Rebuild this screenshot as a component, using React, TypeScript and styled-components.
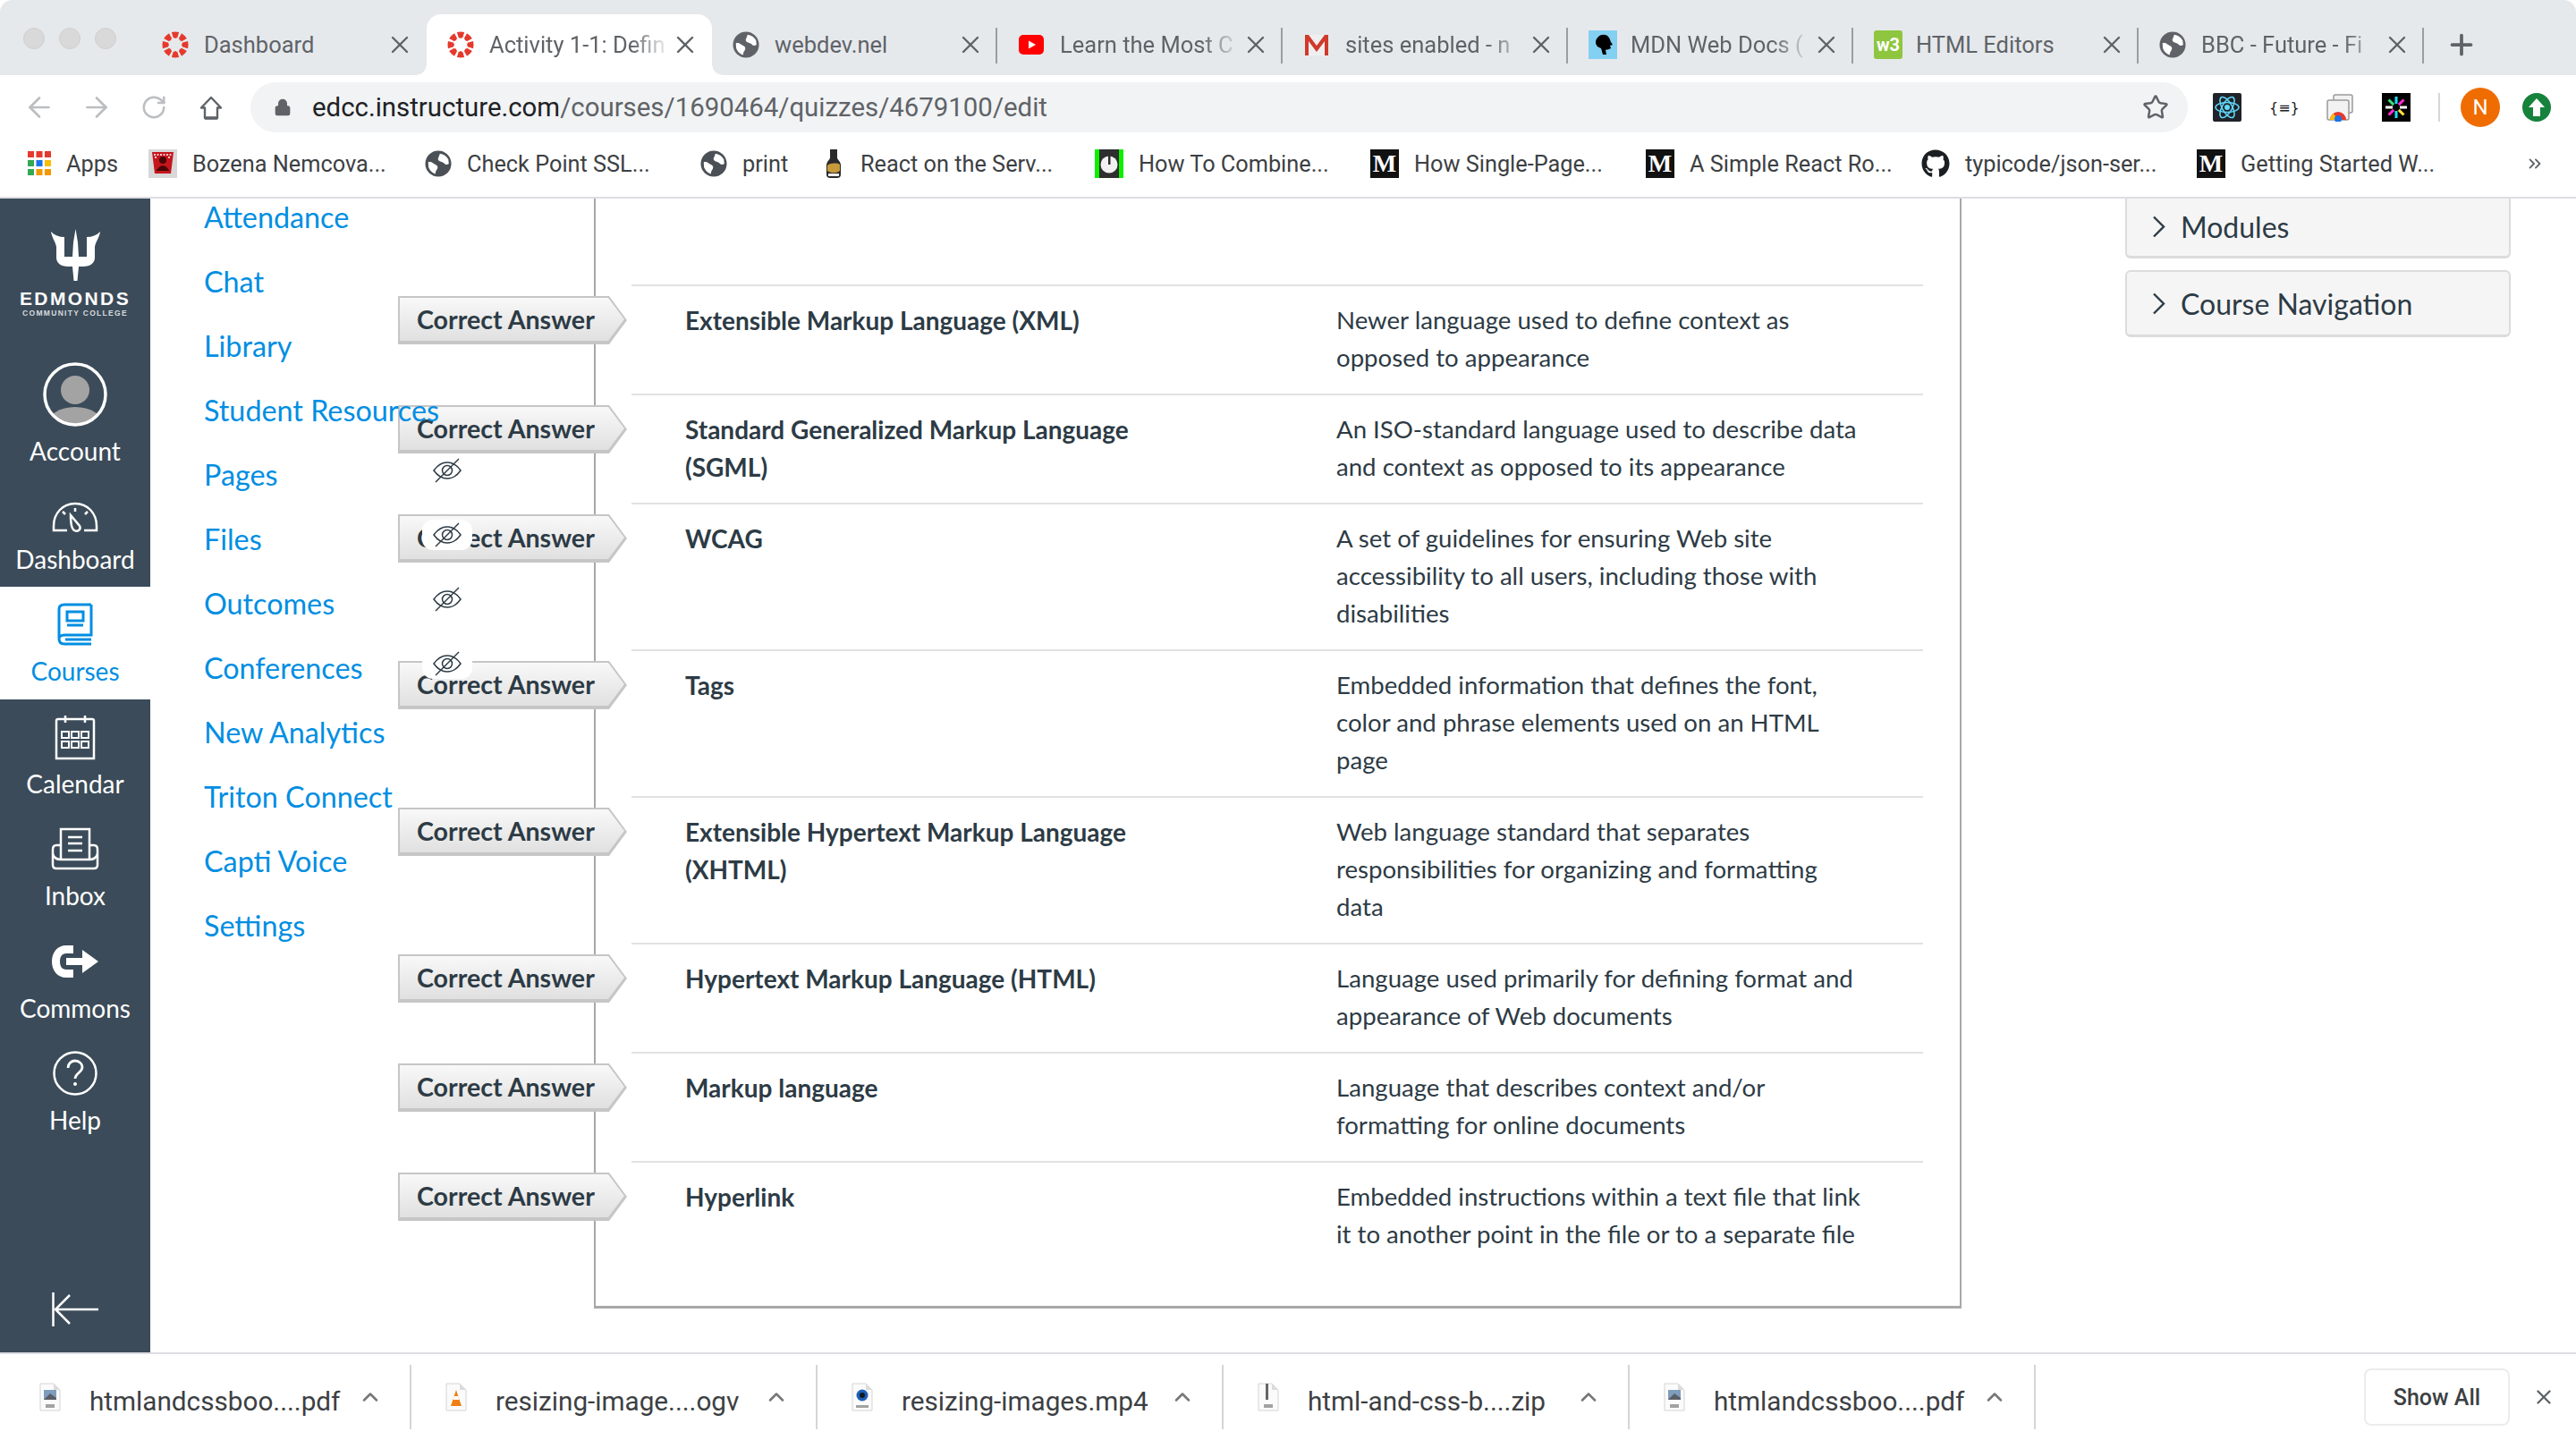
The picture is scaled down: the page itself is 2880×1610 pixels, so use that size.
import React from "react";
import styled, { createGlobalStyle, css } from "styled-components";
import {
  ArrowLeft,
  ArrowRight,
  ChevronUp,
  ChevronsRight,
  Lock,
  Plus,
  RotateCw,
  Star,
  X,
} from "lucide-react";
import { FaGithub } from "react-icons/fa";

const BLUE = "#008ee2";
const INK = "#2d3b45";

const tabs = [
  { title: "Dashboard", icon: "canvas" },
  { title: "Activity 1-1: Defin", icon: "canvas", active: true, fade: true },
  { title: "webdev.nel", icon: "globe" },
  { title: "Learn the Most C", icon: "youtube", fade: true },
  { title: "sites enabled - n", icon: "gmail", fade: true },
  { title: "MDN Web Docs (", icon: "mdn", fade: true },
  { title: "HTML Editors", icon: "w3" },
  { title: "BBC - Future - Fi", icon: "globe", fade: true },
];

const bookmarks = [
  { title: "Apps", icon: "apps", width: 135 },
  { title: "Bozena Nemcova...", icon: "film", width: 309 },
  { title: "Check Point SSL...", icon: "globe", width: 308 },
  { title: "print", icon: "globe", width: 136 },
  { title: "React on the Serv...", icon: "bottle", width: 305 },
  { title: "How To Combine...", icon: "clock", width: 308 },
  { title: "How Single-Page...", icon: "medium", width: 308 },
  { title: "A Simple React Ro...", icon: "medium", width: 308 },
  { title: "typicode/json-ser...", icon: "github", width: 308 },
  { title: "Getting Started W...", icon: "medium", width: 308 },
];

const courseLinks = [
  { label: "Attendance" },
  { label: "Chat" },
  { label: "Library" },
  { label: "Student Resources" },
  { label: "Pages", hidden: true },
  { label: "Files", hidden: true },
  { label: "Outcomes", hidden: true },
  { label: "Conferences", hidden: true },
  { label: "New Analytics" },
  { label: "Triton Connect" },
  { label: "Capti Voice" },
  { label: "Settings" },
];

const answers = [
  {
    term: "Extensible Markup Language (XML)",
    text: "Newer language used to define context as opposed to appearance",
  },
  {
    term: "Standard Generalized Markup Language (SGML)",
    text: "An ISO-standard language used to describe data and context as opposed to its appearance",
  },
  {
    term: "WCAG",
    text: "A set of guidelines for ensuring Web site accessibility to all users, including those with disabilities",
  },
  {
    term: "Tags",
    text: "Embedded information that defines the font, color and phrase elements used on an HTML page",
  },
  {
    term: "Extensible Hypertext Markup Language (XHTML)",
    text: "Web language standard that separates responsibilities for organizing and formatting data",
  },
  {
    term: "Hypertext Markup Language (HTML)",
    text: "Language used primarily for defining format and appearance of Web documents",
  },
  {
    term: "Markup language",
    text: "Language that describes context and/or formatting for online documents",
  },
  {
    term: "Hyperlink",
    text: "Embedded instructions within a text file that link it to another point in the file or to a separate file",
  },
];

const downloads = [
  { name: "htmlandcssboo....pdf", kind: "pdf" },
  { name: "resizing-image....ogv", kind: "vlc" },
  { name: "resizing-images.mp4", kind: "mov" },
  { name: "html-and-css-b....zip", kind: "zip" },
  { name: "htmlandcssboo....pdf", kind: "pdf" },
];

function CanvasLogo() {
  const spokes = [0, 45, 90, 135, 180, 225, 270, 315];
  return (
    <svg width="30" height="32" viewBox="0 0 32 32">
      {spokes.map((a) => (
        <g key={a} transform={`rotate(${a} 16 16)`}>
          <path d="M11.600 1 Q16 0 20.400 1 L18.400 7.800 Q16 7.200 13.600 7.800Z" fill="#e5392d" />
          <circle cx="22.400" cy="9.600" r="1.500" fill="#e5392d" />
        </g>
      ))}
    </svg>
  );
}

function Globe({ size = 30, color = "#5f6368" }: { size?: number; color?: string }) {
  return (
    <svg width={size} height={size} viewBox="0 0 32 32">
      <circle cx="16" cy="16" r="15.500" fill={color} />
      <path
        d="M18 4c4 .5 8 3 10 7l.6 5c-2 1.600-4 1.400-5.500-.3-1.500-1.600-3.500-1.700-5.300-2.600-2-1-2.800-3-1.400-4.800z"
        fill="#fff"
      />
      <path
        d="M4 14c2-.6 4 0 5.500 1.200 2 1.600 4.500 1.800 5.500 4 .8 2-.5 3.500-1.500 5-.8 1.200-.7 2.800-1 4-4-1.300-7-4.200-8.200-8.200z"
        fill="#fff"
      />
    </svg>
  );
}

function HomeIcon() {
  return (
    <svg width="26" height="27" viewBox="0 0 26 27">
      <path d="M13 2 L24 13.500 H20 V25 H6 V13.500 H2Z" fill="none" stroke="#5f6368" strokeWidth="2.400" strokeLinejoin="round" />
      <path d="M6 25 H20" stroke="#5f6368" strokeWidth="3.500" />
    </svg>
  );
}

function ChevronGlyph() {
  return (
    <svg width="15" height="25" viewBox="0 0 15 25">
      <path d="M2 1.500 L13 12.500 L2 23.500" fill="none" stroke={INK} strokeWidth="2.400" />
    </svg>
  );
}

function TabIcon({ kind }: { kind: string }) {
  switch (kind) {
    case "canvas":
      return <CanvasLogo />;
    case "globe":
      return <Globe />;
    case "youtube":
      return (
        <svg width="30" height="32" viewBox="0 0 30 32">
          <rect x="1" y="5" width="28" height="22" rx="5" fill="#f00" />
          <path d="M12 11.500 L20 16 L12 20.500Z" fill="#fff" />
        </svg>
      );
    case "gmail":
      return (
        <svg width="30" height="32" viewBox="0 0 30 32">
          <path d="M2 5 H28 V28 H2Z" fill="#f0efef" />
          <path d="M2 28 V5 H6 L15 17 L24 5 H28 V28 H24 V12 L15 24 L6 12 V28Z" fill="#d0392b" />
        </svg>
      );
    case "mdn":
      return (
        <svg width="32" height="32" viewBox="0 0 32 32">
          <rect width="32" height="32" fill="#83d0f2" />
          <path
            d="M11 7c3-3 9-3 11 0 2 2 2 4 3 6l2 3-3 1 1 3c-3 2-5 1-6 2l1 5-4 0-2-7c-3-1-6-3-6-7 0-2 1-4 3-6z"
            fill="#000"
          />
        </svg>
      );
    case "w3":
      return <W3Icon>w3</W3Icon>;
    default:
      return null;
  }
}

function BookmarkIcon({ kind }: { kind: string }) {
  switch (kind) {
    case "apps": {
      const colors = ["#e5392d", "#e5392d", "#e5392d", "#34a853", "#1a73e8", "#fbbc04", "#34a853", "#f29900", "#f29900"];
      return (
        <svg width="26" height="28" viewBox="0 0 26 28">
          {colors.map((c, i) => (
            <rect key={i} x={(i % 3) * 9.5} y={Math.floor(i / 3) * 10} width="7" height="7" fill={c} />
          ))}
        </svg>
      );
    }
    case "film":
      return (
        <svg width="32" height="32" viewBox="0 0 32 32">
          <rect width="32" height="32" fill="#d8d8d8" />
          <path d="M4 3 H28 L25 27 H7Z" fill="#c4161c" />
          <circle cx="16" cy="12" r="4" fill="#4a0507" />
          <path d="M8.500 24 Q16 12 23.500 24Z" fill="#4a0507" />
          <path d="M6 6 H26 M7 9 H10 M22 9 H25" stroke="#fff" strokeWidth="1.500" strokeDasharray="2 1.500" />
        </svg>
      );
    case "globe":
      return <Globe color="#4b5057" />;
    case "bottle":
      return (
        <svg width="26" height="32" viewBox="-3 0 26 32">
          <path d="M6 0 H14 V9 C14 12 18 13 18 18 V28 C18 31 16 32 14 32 H6 C4 32 2 31 2 28 V18 C2 13 6 12 6 9Z" fill="#2a2a2a" />
          <path d="M3 18 C6 15 14 15 17 17 V24 C13 27 7 27 3 24Z" fill="#c79a3b" />
          <path d="M4 27 H16 V30 H4Z" fill="#eee" />
        </svg>
      );
    case "clock":
      return (
        <svg width="32" height="32" viewBox="0 0 32 32">
          <rect width="32" height="32" fill="#0cf000" />
          <rect x="5" width="22" height="32" fill="#2e2e2e" />
          <circle cx="16" cy="17" r="9.500" fill="#f1f1f1" />
          <rect x="15" y="7" width="2.500" height="10" fill="#2e2e2e" />
        </svg>
      );
    case "medium":
      return <MediumIcon>M</MediumIcon>;
    case "github":
      return <FaGithub size={32} color="#1b1f23" />;
    default:
      return null;
  }
}

function FileIcon({ kind }: { kind: string }) {
  return (
    <svg width="24" height="32" viewBox="0 0 24 32">
      <path d="M1 1 H16 L23 8 V31 H1Z" fill="#fbfbfb" stroke="#d4d4d4" />
      <path d="M16 1 V8 H23Z" fill="#dcdcdc" />
      {kind === "pdf" && (
        <>
          <rect x="5" y="8" width="14" height="11" fill="#7f9dbd" />
          <path d="M5 19 L12 12 L19 17 V19Z" fill="#5b5f65" />
          <rect x="7" y="24" width="10" height="4" fill="#a2a2a2" />
        </>
      )}
      {kind === "vlc" && (
        <>
          <path d="M12 8 L18 26 H6Z" fill="#f07f13" />
          <path d="M9.500 15 H14.500 L15.500 19 H8.500Z" fill="#fff" />
        </>
      )}
      {kind === "mov" && (
        <>
          <circle cx="12" cy="14" r="6.500" fill="#1d5fb8" />
          <circle cx="12" cy="14" r="3" fill="#101820" />
          <rect x="5" y="25" width="14" height="3" fill="#a2a2a2" />
        </>
      )}
      {kind === "zip" && (
        <>
          <rect x="9" y="1" width="3" height="18" fill="#666" />
          <rect x="7" y="24" width="10" height="4" fill="#a2a2a2" />
        </>
      )}
    </svg>
  );
}

function Trident() {
  return (
    <svg width="55" height="58" viewBox="0 0 55 58">
      <path
        d="M0 3 C4 7 9 9 15 9 L15 31 L24 31 L25 15 L27.500 0 L30 15 L31 31 L40 31 L40 9 C46 9 51 7 55 3 C54 10 50 14 49 20 L49 32 C49 38 44 42 36 42 L31 42 L29.500 58 L25.500 58 L24 42 L19 42 C11 42 6 38 6 32 L6 20 C5 14 1 10 0 3Z"
        fill="#fff"
      />
    </svg>
  );
}

function Avatar() {
  return (
    <svg width="72" height="72" viewBox="0 0 72 72">
      <defs>
        <clipPath id="avatarClip">
          <circle cx="36" cy="36" r="33" />
        </clipPath>
      </defs>
      <g clipPath="url(#avatarClip)">
        <circle cx="36" cy="31" r="16" fill="#a3a3a3" />
        <ellipse cx="36" cy="70" rx="31" ry="20" fill="#a3a3a3" />
      </g>
      <circle cx="36" cy="36" r="34" fill="none" stroke="#fff" strokeWidth="3.500" />
    </svg>
  );
}

function NavIcon({ name }: { name: string }) {
  const stroke = { fill: "none", stroke: "currentColor", strokeWidth: 2.5 };
  switch (name) {
    case "Dashboard":
      return (
        <svg width="52" height="34" viewBox="0 0 52 34">
          <path d="M17 32 H2 V27 C2 13 12 2 26 2 C40 2 50 13 50 27 V32 H36" {...stroke} />
          <path d="M21 15 L31 27 C33 31 29 34 25 32 C21 30 21 20 21 15Z" {...stroke} />
          <path d="M26 7 V11 M12 11 L15 14 M40 11 L37 14" {...stroke} />
        </svg>
      );
    case "Courses":
      return (
        <svg width="40" height="48" viewBox="0 0 40 48">
          <path d="M38 2 H8 C4 2 2 4 2 7 V40 C2 44 4 46 8 46 H38 M38 2 V36 H8 C4 36 2 38 2 40" {...stroke} strokeWidth={3} />
          <path d="M38 41 H9" {...stroke} strokeWidth={3} />
          <rect x="11" y="10" width="18" height="10" {...stroke} strokeWidth={3} />
          <path d="M11 25 H29" {...stroke} strokeWidth={3} />
        </svg>
      );
    case "Calendar":
      return (
        <svg width="46" height="52" viewBox="0 0 46 52">
          <path d="M2 8 Q2 6 4 6 H42 Q44 6 44 8 V50 H2Z" {...stroke} />
          <path d="M12 2 V10 M34 2 V10" {...stroke} />
          {[0, 1, 2].map((c) =>
            [0, 1].map((r) => (
              <rect key={`${c}${r}`} x={8 + c * 11} y={20 + r * 11} width="8" height="7" {...stroke} strokeWidth={2} />
            )),
          )}
        </svg>
      );
    case "Inbox":
      return (
        <svg width="54" height="48" viewBox="0 0 54 48">
          <path d="M11 36 V2 H43 V36" {...stroke} />
          <path d="M11 20 H6 Q2 20 2 25 V42 Q2 46 6 46 H48 Q52 46 52 42 V25 Q52 20 48 20 H43" {...stroke} />
          <path d="M2 30 Q4 36 11 36 H43 Q50 36 52 30" {...stroke} />
          <path d="M19 11 H35 M19 18 H35 M19 26 H35" {...stroke} />
        </svg>
      );
    case "Commons":
      return (
        <svg width="52" height="36" viewBox="0 0 52 36">
          <path d="M24 0 H16 C6 0 0 8 0 18 C0 28 6 36 16 36 H24 V27 H16 C11 27 9 23 9 18 C9 13 11 9 16 9 H24Z" fill="currentColor" />
          <path d="M16 14 H34 V5 L52 18 L34 31 V22 H16Z" fill="currentColor" />
        </svg>
      );
    case "Help":
      return (
        <svg width="50" height="50" viewBox="0 0 50 50">
          <circle cx="25" cy="25" r="23.500" {...stroke} />
          <path d="M17 19 C17 14 21 11 25 11 C30 11 33 15 33 18 C33 24 25 25 25 31" {...stroke} strokeWidth={2.8} />
          <circle cx="25" cy="37" r="2" fill="currentColor" />
        </svg>
      );
    default:
      return null;
  }
}

function HiddenEye() {
  return (
    <svg width="32" height="28" viewBox="0 0 32 28">
      <g fill="none" stroke={INK} strokeWidth="1.500">
        <path d="M1 14 C6 7 11 5 16 5 C21 5 26 7 31 14 C26 21 21 23 16 23 C11 23 6 21 1 14Z" />
        <circle cx="16" cy="14" r="5.500" />
        <path d="M3 27 L29 1" />
      </g>
    </svg>
  );
}

function Extensions() {
  const ticks = ["#18e0ff", "#ff2bd0", "#fff", "#ffe23c", "#18e0ff", "#ff2bd0", "#fff", "#34e07a"];
  return (
    <ExtGroup>
      <svg width="32" height="32" viewBox="0 0 32 32">
        <rect width="32" height="32" rx="2" fill="#20232a" />
        <g fill="none" stroke="#61dafb" strokeWidth="1.500">
          <ellipse cx="16" cy="16" rx="13" ry="5.500" />
          <ellipse cx="16" cy="16" rx="13" ry="5.500" transform="rotate(60 16 16)" />
          <ellipse cx="16" cy="16" rx="13" ry="5.500" transform="rotate(120 16 16)" />
        </g>
        <circle cx="16" cy="16" r="3" fill="#61dafb" />
      </svg>
      <BraceIcon>{"{≡}"}</BraceIcon>
      <svg width="32" height="32" viewBox="0 0 32 32">
        <rect x="9" y="2" width="21" height="20" rx="2" fill="#f2f2f2" stroke="#9a9a9a" strokeWidth="1.500" />
        <rect x="2" y="8" width="24" height="22" rx="2" fill="#f2f2f2" stroke="#9a9a9a" strokeWidth="1.500" />
        <path d="M5 30 A9 9 0 0 1 23 30Z" fill="#e5392d" />
        <path d="M5 30 A9 9 0 0 1 9 23 L14 30Z" fill="#fbbc04" />
        <circle cx="14" cy="29" r="4" fill="#1a73e8" />
      </svg>
      <svg width="32" height="32" viewBox="0 0 32 32">
        <rect width="32" height="32" fill="#000" />
        {ticks.map((c, i) => (
          <rect key={i} x="14.500" y="4" width="3" height="8" fill={c} transform={`rotate(${i * 45} 16 16)`} />
        ))}
      </svg>
      <ExtDivider />
      <ProfileBadge>N</ProfileBadge>
      <svg width="32" height="32" viewBox="0 0 32 32">
        <circle cx="16" cy="16" r="16" fill="#16823c" />
        <path d="M16 6 L25 16 H20 V26 H12 V16 H7Z" fill="#fff" />
      </svg>
    </ExtGroup>
  );
}

export default function App(): React.ReactElement {
  return (
    <>
      <GlobalStyle />
      <Page>
        <TabStrip>
          <Lights>
            <Light />
            <Light />
            <Light />
          </Lights>
          {tabs.map((t, i) => (
            <Tab key={i} $active={!!t.active} $noDivider={i < 2}>
              <TabFavicon>
                <TabIcon kind={t.icon} />
              </TabFavicon>
              <TabTitle $fade={!!t.fade}>{t.title}</TabTitle>
              <X size={32} strokeWidth={1.8} color="#5f6368" />
            </Tab>
          ))}
          <NewTab>
            <Plus size={36} strokeWidth={2.5} color="#5f6368" />
          </NewTab>
        </TabStrip>

        <Toolbar>
          <NavButton $dim>
            <ArrowLeft size={36} strokeWidth={1.8} />
          </NavButton>
          <NavButton $dim>
            <ArrowRight size={36} strokeWidth={1.8} />
          </NavButton>
          <NavButton $dim>
            <RotateCw size={30} strokeWidth={2} />
          </NavButton>
          <NavButton>
            <HomeIcon />
          </NavButton>
          <UrlBar>
            <Lock size={20} fill="#5f6368" color="#5f6368" />
            <UrlText>
              <UrlHost>edcc.instructure.com</UrlHost>/courses/1690464/quizzes/4679100/edit
            </UrlText>
            <Star size={30} strokeWidth={2} color="#5f6368" />
          </UrlBar>
          <Extensions />
        </Toolbar>

        <BookmarkBar>
          {bookmarks.map((b) => (
            <Bookmark key={b.title} $width={b.width}>
              <BookmarkIcon kind={b.icon} />
              <span>{b.title}</span>
            </Bookmark>
          ))}
          <BookmarkMore>
            <ChevronsRight size={22} strokeWidth={2} />
          </BookmarkMore>
        </BookmarkBar>

        <Main>
          <Sidebar>
            <LogoBlock>
              <Trident />
              <LogoName>EDMONDS</LogoName>
              <LogoSub>COMMUNITY COLLEGE</LogoSub>
            </LogoBlock>
            <SideItem>
              <AvatarSlot>
                <Avatar />
              </AvatarSlot>
              <SideLabel>Account</SideLabel>
            </SideItem>
            {["Dashboard", "Courses", "Calendar", "Inbox", "Commons", "Help"].map((name) => (
              <SideItem key={name} $active={name === "Courses"}>
                <IconSlot $low={name === "Dashboard"}>
                  <NavIcon name={name} />
                </IconSlot>
                <SideLabel>{name}</SideLabel>
              </SideItem>
            ))}
            <Collapse>
              <svg width="52" height="38" viewBox="0 0 52 38">
                <path d="M1.500 0 V38 M52 19 H4 M20 3 L4 19 L20 35" fill="none" stroke="#fff" strokeWidth="2.500" />
              </svg>
            </Collapse>
          </Sidebar>

          <Content>
            <CourseNav>
              {courseLinks.map((l) => (
                <CourseLink key={l.label}>
                  {l.label}
                  {l.hidden && (
                    <EyePill>
                      <HiddenEye />
                    </EyePill>
                  )}
                </CourseLink>
              ))}
            </CourseNav>

            <QuizBox>
              {answers.map((a) => (
                <AnswerRow key={a.term}>
                  <AnswerBadge>Correct Answer</AnswerBadge>
                  <AnswerTerm>{a.term}</AnswerTerm>
                  <AnswerText>{a.text}</AnswerText>
                </AnswerRow>
              ))}
            </QuizBox>

            <Aside>
              <AsideBox $clipped>
                <ChevronGlyph />
                Modules
              </AsideBox>
              <AsideBox>
                <ChevronGlyph />
                Course Navigation
              </AsideBox>
            </Aside>
          </Content>
        </Main>

        <DownloadBar>
          {downloads.map((d, i) => (
            <DownloadItem key={i}>
              <FileIcon kind={d.kind} />
              <DownloadName>{d.name}</DownloadName>
              <ChevronUp size={28} strokeWidth={2.2} color="#777" />
            </DownloadItem>
          ))}
          <ShowAll>Show All</ShowAll>
          <X size={26} strokeWidth={2.2} color="#5f6368" />
        </DownloadBar>
      </Page>
    </>
  );
}

const GlobalStyle = createGlobalStyle`
  html, body {
    margin: 0;
    padding: 0;
    background: #fff;
  }
  * {
    box-sizing: border-box;
  }
`;

const Page = styled.div`
  width: 2880px;
  height: 1610px;
  display: flex;
  flex-direction: column;
  overflow: hidden;
  font-family: Roboto, "Liberation Sans", sans-serif;
`;

const TabStrip = styled.div`
  height: 84px;
  flex: none;
  display: flex;
  align-items: flex-start;
  background: #e6e9ec;
  border-radius: 14px 14px 0 0;
`;

const Lights = styled.div`
  width: 158px;
  height: 84px;
  flex: none;
  display: flex;
  gap: 16px;
  padding: 31px 0 0 26px;
`;

const Light = styled.div`
  width: 24px;
  height: 24px;
  border-radius: 50%;
  background: #d9d9d9;
  border: 1px solid #cfcfcf;
`;

const activeFlare = css`
  &::before,
  &::after {
    content: "";
    position: absolute;
    bottom: 0;
    top: auto;
    width: 12px;
    height: 12px;
  }
  &::before {
    left: -12px;
    background: radial-gradient(circle at 0 0, transparent 11.500px, #fff 12px);
  }
  &::after {
    right: -12px;
    background: radial-gradient(circle at 100% 0, transparent 11.500px, #fff 12px);
  }
`;

const Tab = styled.div<{ $active?: boolean; $noDivider?: boolean }>`
  width: 319px;
  height: 68px;
  flex: none;
  margin-top: 16px;
  padding: 0 14px 0 23px;
  display: flex;
  align-items: center;
  position: relative;
  background: ${(p) => (p.$active ? "#fff" : "transparent")};
  border-radius: 16px 16px 0 0;

  &::after {
    content: "";
    position: absolute;
    right: 0;
    top: 15px;
    height: 40px;
    width: 2px;
    background: ${(p) => (p.$noDivider ? "transparent" : "#9a9da1")};
  }
  ${(p) => (p.$active ? activeFlare : "")}
`;

const TabFavicon = styled.div`
  width: 47px;
  flex: none;
  display: flex;
  align-items: center;
`;

const TabTitle = styled.div<{ $fade?: boolean }>`
  flex: 1;
  min-width: 0;
  white-space: nowrap;
  overflow: hidden;
  font-size: 25.500px;
  color: #5f6368;
  ${(p) =>
    p.$fade
      ? "-webkit-mask-image: linear-gradient(90deg, #000 78%, transparent 100%); mask-image: linear-gradient(90deg, #000 78%, transparent 100%);"
      : ""}
`;

const NewTab = styled.div`
  margin: 32px 0 0 24px;
  display: flex;
`;

const W3Icon = styled.div`
  width: 32px;
  height: 32px;
  background: #8ec63f;
  border-radius: 3px;
  color: #fff;
  font-size: 20px;
  font-weight: 700;
  line-height: 32px;
  text-align: center;
`;

const Toolbar = styled.div`
  height: 64px;
  flex: none;
  display: flex;
  align-items: flex-start;
  padding: 8px 0 0 12px;
  background: #fff;
`;

const NavButton = styled.div<{ $dim?: boolean }>`
  width: 64px;
  height: 56px;
  flex: none;
  display: flex;
  align-items: center;
  justify-content: center;
  color: ${(p) => (p.$dim ? "#bcbec1" : "#5f6368")};
`;

const UrlBar = styled.div`
  width: 2166px;
  height: 56px;
  flex: none;
  margin-left: 12px;
  padding: 0 21px 0 26px;
  display: flex;
  align-items: center;
  background: #f1f3f4;
  border-radius: 28px;
`;

const UrlText = styled.div`
  flex: 1;
  margin-left: 23px;
  font-size: 29.400px;
  color: #5f6368;
`;

const UrlHost = styled.span`
  color: #202124;
`;

const ExtGroup = styled.div`
  height: 56px;
  margin-left: 28px;
  display: flex;
  align-items: center;
  gap: 31px;
`;

const BraceIcon = styled.div`
  width: 32px;
  font-family: "DejaVu Sans", sans-serif;
  font-size: 16px;
  text-align: center;
  color: #202124;
  white-space: nowrap;
`;

const ExtDivider = styled.div`
  width: 2px;
  height: 32px;
  background: #d5d7da;
  margin-right: -8px;
`;

const ProfileBadge = styled.div`
  width: 44px;
  height: 44px;
  border-radius: 50%;
  background: #ef6c00;
  color: #fff;
  font-size: 24px;
  line-height: 44px;
  text-align: center;
  margin-right: -6px;
`;

const BookmarkBar = styled.div`
  height: 74px;
  flex: none;
  display: flex;
  align-items: center;
  padding: 0 0 2px 31px;
  background: #fff;
  border-bottom: 2px solid #dddde3;
`;

const Bookmark = styled.div<{ $width: number }>`
  width: ${(p) => p.$width}px;
  flex: none;
  display: flex;
  align-items: center;
  gap: 17px;
  font-size: 25.300px;
  color: #3c4043;
  white-space: nowrap;
`;

const MediumIcon = styled.div`
  width: 32px;
  height: 32px;
  flex: none;
  background: #111;
  color: #fff;
  font-family: "Liberation Serif", serif;
  font-size: 28px;
  font-weight: 700;
  line-height: 32px;
  text-align: center;
`;

const BookmarkMore = styled.div`
  margin-left: 59px;
  display: flex;
  color: #5f6368;
`;

const Main = styled.div`
  flex: 1;
  min-height: 0;
  display: flex;
  overflow: hidden;
  font-family: Lato, "Liberation Sans", sans-serif;
`;

const Sidebar = styled.div`
  width: 168px;
  flex: none;
  display: flex;
  flex-direction: column;
  background: #3b4b59;
  color: #fff;
`;

const LogoBlock = styled.div`
  height: 183px;
  flex: none;
  padding-top: 34px;
  display: flex;
  flex-direction: column;
  align-items: center;
`;

const LogoName = styled.div`
  margin-top: 9px;
  font-family: "Liberation Sans", sans-serif;
  font-size: 21px;
  line-height: 22px;
  font-weight: 700;
  letter-spacing: 2.400px;
  white-space: nowrap;
`;

const LogoSub = styled.div`
  font-family: "Liberation Sans", sans-serif;
  font-size: 8.500px;
  line-height: 10px;
  font-weight: 700;
  letter-spacing: 1.300px;
  white-space: nowrap;
  color: #d6dade;
`;

const SideItem = styled.div<{ $active?: boolean }>`
  height: 125.500px;
  flex: none;
  display: flex;
  flex-direction: column;
  align-items: center;
  background: ${(p) => (p.$active ? "#fff" : "transparent")};
  color: ${(p) => (p.$active ? BLUE : "#fff")};
`;

const IconSlot = styled.div<{ $low?: boolean }>`
  height: 56px;
  margin: 14px 0 6px;
  padding-top: ${(p) => (p.$low ? 10 : 0)}px;
  display: flex;
  align-items: center;
  justify-content: center;
`;

const AvatarSlot = styled.div`
  height: 72px;
  margin-bottom: 9px;
  display: flex;
`;

const SideLabel = styled.div`
  font-size: 28px;
  line-height: 36px;
  white-space: nowrap;
`;

const Collapse = styled.div`
  margin-top: auto;
  padding-bottom: 29px;
  display: flex;
  justify-content: center;
`;

const Content = styled.div`
  flex: 1;
  min-width: 0;
  display: flex;
  align-items: flex-start;
  color: ${INK};
`;

const CourseNav = styled.div`
  width: 496px;
  flex: none;
  padding-left: 60px;
  position: relative;
  z-index: 2;
`;

const CourseLink = styled.div`
  position: relative;
  height: 42px;
  margin-bottom: 30px;
  font-size: 32.300px;
  line-height: 42px;
  color: ${BLUE};
  white-space: nowrap;
`;

const EyePill = styled.div`
  position: absolute;
  left: 244px;
  top: -1px;
  width: 56px;
  height: 34px;
  display: flex;
  align-items: center;
  justify-content: center;
  background: #fff;
  border-radius: 12px;
`;

const QuizBox = styled.div`
  width: 1529px;
  flex: none;
  padding: 96px 41px 40px 40px;
  background: #fff;
  border: solid #a8a8a8;
  border-width: 0 2px 3px 2px;
`;

const AnswerRow = styled.div`
  position: relative;
  display: flex;
  padding: 17px 0 19px;
  border-top: 2px solid #e2e2e2;
  font-size: 27.600px;
  line-height: 42px;
`;

const AnswerBadge = styled.div`
  position: absolute;
  left: -261px;
  top: 11px;
  width: 256px;
  height: 54px;
  padding: 0 0 2px 21px;
  display: flex;
  align-items: center;
  font-size: 28.600px;
  font-weight: 700;
  background: #c6c6c6;
  clip-path: polygon(0 0, 236px 0, 100% 50%, 236px 100%, 0 100%);
  z-index: 1;
  white-space: nowrap;

  &::before {
    content: "";
    position: absolute;
    inset: 2px 0 4px 2px;
    background: linear-gradient(#f8f8f8, #e0e0e0);
    clip-path: polygon(0 0, 233px 0, 251px 50%, 233px 100%, 0 100%);
    z-index: -1;
  }
`;

const AnswerTerm = styled.div`
  width: 788px;
  flex: none;
  padding: 0 138px 0 60px;
  font-size: 28px;
  font-weight: 700;
`;

const AnswerText = styled.div`
  width: 592px;
  flex: none;
`;

const Aside = styled.div`
  width: 431px;
  flex: none;
  margin-left: 183px;
  display: flex;
  flex-direction: column;
  gap: 13px;
`;

const AsideBox = styled.div<{ $clipped?: boolean }>`
  height: ${(p) => (p.$clipped ? 67 : 75)}px;
  padding: 0 0 ${(p) => (p.$clipped ? 2 : 0)}px 28px;
  display: flex;
  align-items: center;
  gap: 17px;
  font-size: 32px;
  background: #f5f5f5;
  border: 2px solid #dcdcdc;
  border-bottom-width: 3px;
  border-top-width: ${(p) => (p.$clipped ? 0 : 2)}px;
  border-radius: ${(p) => (p.$clipped ? "0 0 6px 6px" : "6px")};
`;

const DownloadBar = styled.div`
  height: 98px;
  flex: none;
  display: flex;
  align-items: center;
  padding: 0 23px 0 6px;
  background: #fff;
  border-top: 2px solid #dddde3;
`;

const DownloadItem = styled.div`
  width: 454px;
  height: 72px;
  flex: none;
  padding: 0 30px 0 38px;
  display: flex;
  align-items: center;
  border-right: 2px solid #d5d5d5;
`;

const DownloadName = styled.div`
  flex: 1;
  margin-left: 32px;
  padding-top: 8px;
  font-size: 29.700px;
  color: #3c4043;
  white-space: nowrap;
`;

const ShowAll = styled.div`
  width: 163px;
  height: 64px;
  margin: 0 25px 0 auto;
  display: flex;
  align-items: center;
  justify-content: center;
  border: 2px solid #ececec;
  border-radius: 8px;
  font-size: 25px;
  font-weight: 500;
  color: #3c4043;
`;
